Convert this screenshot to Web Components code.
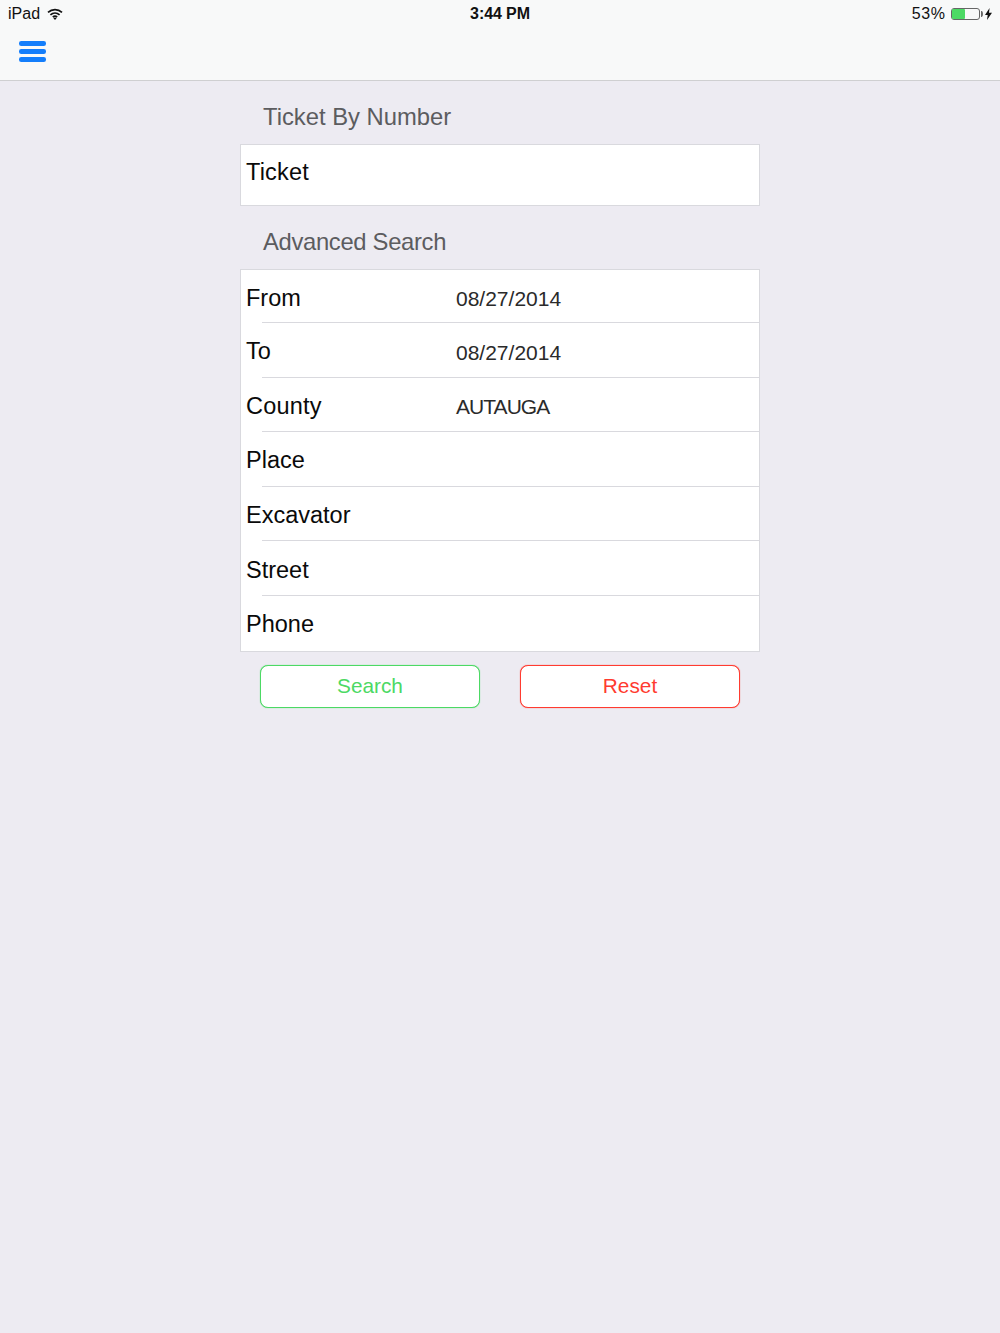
<!DOCTYPE html>
<html><head><meta charset="utf-8"><style>
html,body{margin:0;padding:0;height:100%}
body{background:#edebf2;font-family:"Liberation Sans",Arial,sans-serif;height:1333px;overflow:hidden}
</style></head><body>
<app-nav></app-nav>
<search-page>
  <section-title>Ticket By Number</section-title>
  <form-group>
    <form-row label="Ticket" tall style="--ls:.2px"></form-row>
  </form-group>
  <section-title style="--tls:-.32px">Advanced Search</section-title>
  <form-group>
    <form-row label="From" value="08/27/2014" first></form-row>
    <form-row label="To" value="08/27/2014"></form-row>
    <form-row label="County" value="AUTAUGA" style="--ls:.2px;--vls:-.95px"></form-row>
    <form-row label="Place"></form-row>
    <form-row label="Excavator"></form-row>
    <form-row label="Street"></form-row>
    <form-row label="Phone" last></form-row>
  </form-group>
  <action-bar>
    <action-button color="#4cd964">Search</action-button>
    <action-button color="#ff3b30">Reset</action-button>
  </action-bar>
</search-page>
<script>
function def(name,html,init){customElements.define(name,class extends HTMLElement{
  constructor(){super();this.attachShadow({mode:'open'}).innerHTML=html;}
  connectedCallback(){init&&init(this,this.shadowRoot);}
});}
def('app-nav',`<style>
:host{display:block;height:80px;background:#f8f9f9;border-bottom:1px solid #cfcfd1;color:#111}
.status{display:grid;grid-template-columns:1fr auto 1fr;align-items:center;height:27px;padding:0 8px;font-size:16px}
.l{display:flex;align-items:center;gap:7px}
.r{display:flex;align-items:center;justify-content:flex-end;gap:5px}
.pct{letter-spacing:.6px}
.c{font-weight:700;font-size:16px;letter-spacing:-.1px}
.menu{display:flex;flex-direction:column;gap:3.500px;margin:14px 0 0 19px;width:27px}
.menu i{display:block;height:4.500px;border-radius:2.250px;background:#147efb}
.batt{display:flex;align-items:center;gap:1px}
.b{width:26px;height:10px;border:1.500px solid #666;border-radius:3px;padding:0 1px 0 .5px;display:block}
.b i{display:block;width:13px;height:10px;background:#4cd964;border-radius:1px}
</style>
<div class="status">
 <div class="l"><span>iPad</span><svg width="16" height="12" viewBox="0 0 16 12"><path d="M1 4.3C5 .6 11 .6 15 4.3M3.4 6.8c2.7-2.4 6.500-2.400 9.200 0M5.800 9c1.300-1 3.100-1 4.400 0" fill="none" stroke="#111" stroke-width="1.7"/><path d="M8 12 6.300 10c1-.7 2.400-.7 3.400 0z" fill="#111"/></svg></div>
 <div class="c">3:44 PM</div>
 <div class="r"><span class="pct">53%</span><span class="batt"><span class="b"><i></i></span><svg width="2" height="6" viewBox="0 0 2 6"><path d="M0 0h.6a1.4 3 0 0 1 0 6H0z" fill="#666"/></svg></span><svg width="7" height="12" viewBox="0 0 7 12" style="margin-left:-3px"><path d="M4.6 0 0 7h2.700L2 12l5-7.300H4z" fill="#111"/></svg></div>
</div>
<div class="menu"><i></i><i></i><i></i></div>`);
def('search-page',`<style>:host{display:block;width:520px;margin:0 auto}</style><slot></slot>`);
def('section-title',`<style>:host{display:block;font-size:23.800px;line-height:28px;color:#5c5c5f;padding:22px 0 13px 23px;letter-spacing:var(--tls,0)}</style><slot></slot>`);
def('form-group',`<style>:host{display:block;background:#fff;border:1px solid #d9d9de;box-sizing:border-box}</style><slot></slot>`);
def('form-row',`<style>
:host{display:block;position:relative;height:54.600px;box-sizing:border-box}
:host([tall]){height:60px}
:host([first]){height:53px}
.row{display:grid;grid-template-columns:210px 1fr;align-items:center;height:100%;padding-left:5px}
.label{font-size:23.500px;color:#0a0a0a;padding-top:3px;letter-spacing:var(--ls,0)}
:host([tall]) .label{padding:0 0 5px}
.value{font-size:21px;color:#2a2a2a;padding-top:5px;letter-spacing:var(--vls,0)}
.sep{position:absolute;left:21px;right:0;bottom:0;height:1px;background:#d9d9de}
:host([last]) .sep,:host([tall]) .sep{display:none}
</style><div class="row"><span class="label"></span><span class="value"></span></div><div class="sep"></div>`,
(h,s)=>{s.querySelector('.label').textContent=h.getAttribute('label');s.querySelector('.value').textContent=h.getAttribute('value')||'';});
def('action-bar',`<style>:host{display:flex;justify-content:space-between;padding:13px 20px 0 20px}</style><slot></slot>`);
def('action-button',`<style>
:host{display:flex;align-items:center;justify-content:center;width:220px;height:43px;box-sizing:border-box;background:#fff;border:1px solid var(--c);box-shadow:0 0 1px var(--c);border-radius:8px;color:var(--c);font-size:20.800px}
</style><slot></slot>`,(h)=>h.style.setProperty('--c',h.getAttribute('color')));
</script>
</body></html>
